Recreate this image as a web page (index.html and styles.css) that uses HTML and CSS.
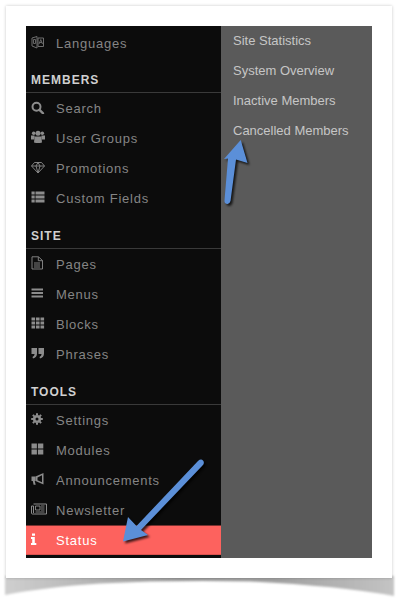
FILE: index.html
```html
<!DOCTYPE html>
<html lang="en">
<head>
<meta charset="utf-8">
<title>Admin menu</title>
<link rel="stylesheet" href="styles.css">
</head>
<body>
<svg class="paper-shadow" width="406" height="607" viewBox="0 0 406 607" aria-hidden="true">
  <defs>
    <linearGradient id="sg" x1="0" x2="1" y1="0" y2="0">
      <stop offset="0" stop-color="#cfcfcf"/>
      <stop offset=".45" stop-color="#9a9a9a"/>
      <stop offset=".7" stop-color="#a0a0a0"/>
      <stop offset="1" stop-color="#c4c4c4"/>
    </linearGradient>
    <filter id="sb" x="-5%" y="-40%" width="110%" height="180%"><feGaussianBlur stdDeviation="1"/></filter>
  </defs>
  <path d="M5 576H394V596Q340 586 250 581.500Q170 580 100 583.500Q45 587 5 595Z" fill="url(#sg)" filter="url(#sb)"/>
</svg>
<main class="card">
  <nav class="sidebar">
    <a class="item">
      <svg class="ico ico-dim" viewBox="0 0 14 14"><path d="M1 3 6 1.500V13L1 11ZM7 3h5.500V11.500H7Z" fill="none" stroke="currentColor"/><path d="M2.500 4.500h2v4h-2ZM8 9 9.800 4.500 11.500 9M8.500 7.500h2.500" fill="none" stroke="currentColor" stroke-width=".9"/></svg>
      <span>Languages</span>
    </a>
    <h2 class="section section-first">MEMBERS</h2>
    <a class="item">
      <svg class="ico" viewBox="0 0 14 14"><circle cx="5.500" cy="6.800" r="4" fill="none" stroke="currentColor" stroke-width="2"/><path d="M8.500 9.800l3.500 3.500" stroke="currentColor" stroke-width="2.400" stroke-linecap="round"/></svg>
      <span>Search</span>
    </a>
    <a class="item">
      <svg class="ico" viewBox="0 0 14 14"><circle cx="2.700" cy="3.200" r="1.800" fill="currentColor"/><circle cx="11.300" cy="3.200" r="1.800" fill="currentColor"/><circle cx="7" cy="3.200" r="2.500" fill="currentColor"/><path d="M0 5.500h3.600L3 9.500H0ZM10.400 5.500H14v4h-3ZM3.600 6.500h6.800l.6 6q-4 1-8 0Z" fill="currentColor"/></svg>
      <span>User Groups</span>
    </a>
    <a class="item">
      <svg class="ico" viewBox="0 0 14 14"><path d="M3.500 2.500h7L13.500 6 7 13 .5 6ZM.5 6h13M5 6 7 13 9 6 7 2.500 5 6" fill="none" stroke="currentColor" stroke-width=".9"/></svg>
      <span>Promotions</span>
    </a>
    <a class="item">
      <svg class="ico" viewBox="0 0 14 14"><path d="M.5 1.500h3.200v3H.5ZM4.500 1.500h9v3h-9ZM.5 5.500h3.200v3H.5ZM4.500 5.500h9v3h-9ZM.5 9.500h3.200v3H.5ZM4.500 9.500h9v3h-9Z" fill="currentColor"/></svg>
      <span>Custom Fields</span>
    </a>
    <h2 class="section">SITE</h2>
    <a class="item">
      <svg class="ico" viewBox="0 0 14 14"><path d="M1 .8h6.500L11.500 4.500V13H1ZM7.300 1v3.700H11.500M3 7h6M3 9h6M3 11h6" fill="none" stroke="currentColor" stroke-width=".9"/></svg>
      <span>Pages</span>
    </a>
    <a class="item">
      <svg class="ico" viewBox="0 0 14 14"><path d="M.5 2.500h11.500v2H.5ZM.5 6h11.500v2H.5ZM.5 9.500h11.500v2H.5Z" fill="currentColor"/></svg>
      <span>Menus</span>
    </a>
    <a class="item">
      <svg class="ico" viewBox="0 0 14 14"><path d="M.5 1.500h3.600v3H.5ZM5 1.500h3.600v3H5ZM9.500 1.500h3.600v3H9.500ZM.5 5.500h3.600v3H.5ZM5 5.500h3.600v3H5ZM9.500 5.500h3.600v3H9.500ZM.5 9.500h3.600v3H.5ZM5 9.500h3.600v3H5ZM9.500 9.500h3.600v3H9.500Z" fill="currentColor"/></svg>
      <span>Blocks</span>
    </a>
    <a class="item">
      <svg class="ico" viewBox="0 0 14 14"><path d="M.5 2h5.500v5.500Q6 11.500 2 12.500L1.500 11Q3.500 10.200 3.600 8H.5ZM7.500 2H13v5.500Q13 11.500 9 12.500L8.500 11Q10.500 10.200 10.600 8H7.500Z" fill="currentColor"/></svg>
      <span>Phrases</span>
    </a>
    <h2 class="section">TOOLS</h2>
    <a class="item">
      <svg class="ico" viewBox="0 0 14 14"><circle cx="6" cy="7" r="2.800" fill="none" stroke="currentColor" stroke-width="2.600"/><path d="M6 1.200v1.800M6 11v1.800M.2 7H2M10 7h1.800M1.900 2.900l1.300 1.300M8.800 9.800l1.300 1.300M10.100 2.900 8.800 4.200M3.200 9.800 1.900 11.100" stroke="currentColor" stroke-width="2"/></svg>
      <span>Settings</span>
    </a>
    <a class="item">
      <svg class="ico" viewBox="0 0 14 14"><path d="M.5 1.500h5.400v5H.5ZM6.900 1.500h5.400v5H6.900ZM.5 7.500h5.400v5H.5ZM6.900 7.500h5.400v5H6.900Z" fill="currentColor"/></svg>
      <span>Modules</span>
    </a>
    <a class="item">
      <svg class="ico" viewBox="0 0 14 14"><path d="M.5 4.500h4V9h-.8l1 3.800H2.600L1.800 9H.5Z" fill="currentColor"/><path d="M4.500 4.500 12.500 1V12.500L4.500 9Z" fill="currentColor"/><path d="M6.500 5.500 11 3.200V10.300L6.500 8.200Z" fill="#0c0c0c"/></svg>
      <span>Announcements</span>
    </a>
    <a class="item">
      <svg class="ico ico-wide" viewBox="0 0 16 14"><path d="M2.500 2h13V12H1.500a1 1 0 0 1-1-1V4h2V11" fill="none" stroke="currentColor"/><path d="M4.500 4H9V8H4.500ZM10 4h3.500M10 6h3.500M10 8h3.500M4.500 10h9" fill="none" stroke="currentColor" stroke-width=".9"/></svg>
      <span>Newsletter</span>
    </a>
    <a class="item item-active">
      <svg class="ico" viewBox="0 0 14 14"><path d="M1 1.500h3v2.300H1ZM0 5h3.800v6h1.500v2H0v-2h1.200V7H0Z" fill="currentColor"/></svg>
      <span>Status</span>
    </a>
  </nav>
  <ul class="submenu">
    <li>Site Statistics</li>
    <li>System Overview</li>
    <li>Inactive Members</li>
    <li>Cancelled Members</li>
  </ul>
</main>
<svg class="arrows" width="406" height="607" viewBox="0 0 406 607" aria-hidden="true">
  <defs>
    <filter id="ab" x="-30%" y="-30%" width="160%" height="160%"><feGaussianBlur stdDeviation="1.300"/></filter>
    <g id="arrow-up"><path d="M240.700 140 247.500 163 236 159.500 230.500 201Q229.500 204.500 227 204 224 203.500 224.500 200L228 158.500 224 159Z"/></g>
    <g id="arrow-down"><path d="M123 541.500 128 517 136.500 526 198 461Q201 458.500 203 460.500 205 463 202.500 465.500L141 530 148 535Z"/></g>
  </defs>
  <use href="#arrow-up" x="2" y="2" fill="#000" opacity=".75" filter="url(#ab)"/>
  <use href="#arrow-down" x="2" y="2" fill="#000" opacity=".75" filter="url(#ab)"/>
  <use href="#arrow-up" fill="#5b8fd8"/>
  <use href="#arrow-down" fill="#5b8fd8"/>
</svg>
</body>
</html>
```

FILE: styles.css
```css
html, body {
  margin: 0;
  padding: 0;
  background: #fff;
}
body {
  position: relative;
  width: 406px;
  height: 607px;
  overflow: hidden;
  padding: 6px 0 0 6px;
  box-sizing: border-box;
}
.paper-shadow, .arrows {
  position: absolute;
  left: 0;
  top: 0;
}
.arrows { pointer-events: none; }
.card {
  position: relative;
  display: flex;
  box-sizing: border-box;
  width: 386px;
  height: 572px;
  padding: 20px;
  background: #fff;
  box-shadow: 0 0 3px rgba(0, 0, 0, .22);
}
.sidebar {
  width: 195px;
  height: 532px;
  box-sizing: border-box;
  padding-top: 2px;
  background: #0c0c0c;
  font-family: "Liberation Sans", Arial, sans-serif;
}
.item {
  display: flex;
  align-items: center;
  box-sizing: border-box;
  height: 30px;
  padding-left: 5px;
  color: #858585;
  font-size: 13px;
  letter-spacing: .76px;
}
.ico {
  flex: none;
  width: 14px;
  height: 14px;
  margin-right: 11px;
  margin-top: -2px;
  color: #8c8c8c;
}
.ico-dim { color: #6e6e6e; }
.ico-wide {
  width: 16px;
  margin-right: 9px;
}
.item-active {
  background: #fd625e;
  color: #fff;
  border-top: 1px solid #7a3230;
  border-bottom: 1px solid #d9534f;
}
.item-active .ico { color: #fff; }
.section {
  box-sizing: border-box;
  height: 36px;
  margin: 0;
  padding: 16px 0 0 5px;
  border-bottom: 1px solid #3a3a3a;
  color: #d0d0d0;
  font-size: 12px;
  line-height: 14px;
  font-weight: 700;
  letter-spacing: 1px;
}
.section-first { height: 35px; padding-top: 15px; }
.submenu {
  width: 151px;
  height: 532px;
  box-sizing: border-box;
  margin: 0;
  padding: 0 0 0 12px;
  list-style: none;
  background: #5a5a5a;
  color: #c6c6c6;
  font-family: "Liberation Sans", Arial, sans-serif;
  font-size: 13px;
}
.submenu li {
  height: 30px;
  line-height: 30px;
}
```
